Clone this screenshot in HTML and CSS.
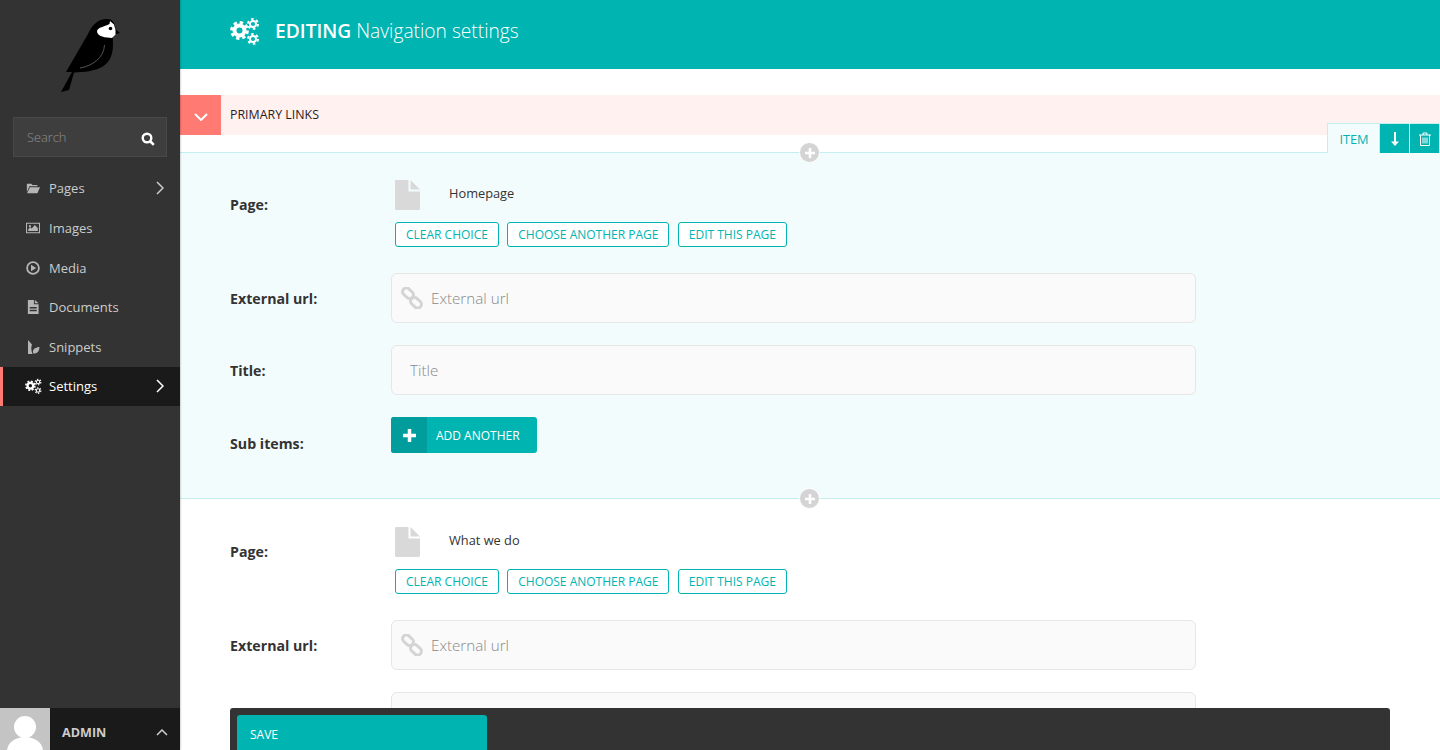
FILE: index.html
```html
<!DOCTYPE html>
<html lang="en">
<head>
    <meta name="viewport" content="width=device-width, initial-scale=1">
    <meta charset="UTF-8">
    <title>Editing Navigation settings</title>
    <link rel="stylesheet" href="styles.css">
</head>
<body>
    <svg class="defs" width="0" height="0">
        <symbol id="cogs" viewBox="0 0 30 28">
            <circle cx="9.500" cy="13.500" r="5" fill="none" stroke="currentColor" stroke-width="4"/>
            <circle cx="9.500" cy="13.500" r="8" fill="none" stroke="currentColor" stroke-width="2.800" stroke-dasharray="3.400 2.880"/>
            <circle cx="23" cy="7" r="3" fill="none" stroke="currentColor" stroke-width="1.900"/>
            <circle cx="23" cy="7" r="5" fill="none" stroke="currentColor" stroke-width="2" stroke-dasharray="2.600 2.640"/>
            <circle cx="23" cy="22" r="3" fill="none" stroke="currentColor" stroke-width="1.900"/>
            <circle cx="23" cy="22" r="5" fill="none" stroke="currentColor" stroke-width="2" stroke-dasharray="2.600 2.640"/>
        </symbol>
        <symbol id="doc" viewBox="0 0 25 30">
            <path fill="currentColor" d="M1 0H13.500V11.500H25V28.500Q25 30 23.500 30H1.500Q0 30 0 28.500V1Q0 0 1 0ZM15.500 0L25 9.500H15.500Z"/>
        </symbol>
        <symbol id="link" viewBox="0 0 22 22">
            <g fill="none" stroke="currentColor" stroke-width="3">
                <rect x="1" y="2.500" width="12" height="7.500" rx="3.700" transform="rotate(42 7 6.250)"/>
                <rect x="9" y="12" width="12" height="7.500" rx="3.700" transform="rotate(42 15 15.750)"/>
            </g>
        </symbol>
    </svg>

    <aside class="sidebar">
        <a class="logo" href="#">
            <svg width="62" height="76" viewBox="59 18 62 76">
                <path fill="#000" d="M61 92L72 72H66L88 34C92 25 98 19 107 19C112 19 115 22 115.500 29L120 33L114 34.500C112.500 37 113 39 113 44C113 58 108 64 100 68C92 71.500 84 72 74 72.500L69 90Z"/>
                <path fill="#fff" d="M97 31C98 27 104 27 109.500 24L110 21L114 24.500L115.500 30V34.500L112 38C106 37.500 97 37 97 31Z"/>
                <circle cx="110.500" cy="28.500" r="1.800" fill="#000"/>
                <path fill="none" stroke="#777" stroke-width="0.700" d="M104.500 45C104 58 92 66 80 68"/>
            </svg>
        </a>
        <form class="search">
            <input class="search-input" type="text" placeholder="Search">
            <svg class="search-icon" width="14" height="14" viewBox="0 0 14 14">
                <circle cx="6" cy="6" r="4.300" fill="none" stroke="currentColor" stroke-width="2.400"/>
                <path d="M9 9L12.800 12.800" stroke="currentColor" stroke-width="2.600"/>
            </svg>
        </form>
        <nav class="menu">
            <a class="menu-item" href="#">
                <svg class="menu-icon" viewBox="0 0 16 14"><path fill="currentColor" d="M1 2H6L7.500 3.500H13V5H4L1 11.500V2ZM4.500 6H16L13 13H1.200Z"/></svg>
                <span>Pages</span>
                <svg class="menu-arrow" viewBox="0 0 8 14"><path d="M1 1L7 7L1 13"/></svg>
            </a>
            <a class="menu-item" href="#">
                <svg class="menu-icon" viewBox="0 0 16 14"><path fill="currentColor" fill-rule="evenodd" d="M0 1H16V13H0ZM1.200 2.200V11.800H14.800V2.200ZM2.500 10.500V8.500L5 6L6.500 7.500L10 3.500L13.500 7V10.500ZM4.500 3.500A1.300 1.300 0 1 1 4.490 3.500Z"/></svg>
                <span>Images</span>
            </a>
            <a class="menu-item" href="#">
                <svg class="menu-icon" viewBox="0 0 14 14"><circle cx="7" cy="7" r="5.900" fill="none" stroke="currentColor" stroke-width="1.800"/><path fill="currentColor" d="M5 3.800L10.200 7L5 10.200Z"/></svg>
                <span>Media</span>
            </a>
            <a class="menu-item" href="#">
                <svg class="menu-icon" viewBox="0 0 14 15"><path fill="currentColor" fill-rule="evenodd" d="M1.500 0H8V4.500H13V15H1.500ZM3.500 7.500V9H11V7.500ZM3.500 10.500V12H11V10.500ZM9 0L13 3.500H9Z"/></svg>
                <span>Documents</span>
            </a>
            <a class="menu-item" href="#">
                <svg class="menu-icon" viewBox="0 0 14 14"><path fill="currentColor" d="M2 0L6 4.500C5 7 5 10 6.500 14H2ZM13.500 7C13.500 11 11 14 7.500 13.500C6 11 7.500 7.500 13.500 7Z"/></svg>
                <span>Snippets</span>
            </a>
            <a class="menu-item active" href="#">
                <svg class="menu-icon cog-icon"><use href="#cogs"/></svg>
                <span>Settings</span>
                <svg class="menu-arrow" viewBox="0 0 8 14"><path d="M1 1L7 7L1 13"/></svg>
            </a>
        </nav>
        <div class="account">
            <div class="avatar">
                <svg width="50" height="42" viewBox="0 0 50 42">
                    <circle cx="25" cy="19" r="11" fill="#fff"/>
                    <path fill="#fff" d="M7 42C8 34 16 29 25 29S42 34 43 42Z"/>
                </svg>
            </div>
            <span class="account-name">ADMIN</span>
            <svg class="account-arrow" viewBox="0 0 12 7"><path d="M1 6L6 1L11 6"/></svg>
        </div>
    </aside>

    <main class="content">
        <header class="top">
            <svg class="top-icon"><use href="#cogs"/></svg>
            <h1><b>EDITING</b> Navigation settings</h1>
        </header>

        <section class="links">
            <div class="links-head">
                <span class="collapse">
                    <svg width="14" height="8" viewBox="0 0 14 8"><path d="M1 1L7 7L13 1"/></svg>
                </span>
                <h2>PRIMARY LINKS</h2>
            </div>

            <div class="item item-open">
                <span class="add-circle"><svg width="10" height="10" viewBox="0 0 10 10"><path d="M5 0V10M0 5H10"/></svg></span>
                <div class="item-tools">
                    <span class="item-tag">ITEM</span>
                    <span class="tool">
                        <svg width="8" height="14" viewBox="0 0 8 14"><path fill="#fff" d="M3 0H5V9.500H8L4 14L0 9.500H3Z"/></svg>
                    </span>
                    <span class="tool">
                        <svg width="12" height="14" viewBox="0 0 12 14"><path fill="none" stroke="#fff" d="M0 3H12M4 3V1H8V3M1.500 3V13.500H10.500V3M4 5.500V11.500M6 5.500V11.500M8 5.500V11.500"/></svg>
                    </span>
                </div>

                <div class="row row-page">
                    <label class="label">Page:</label>
                    <div class="chooser">
                        <div class="chosen">
                            <svg class="doc-icon"><use href="#doc"/></svg>
                            <span>Homepage</span>
                        </div>
                        <div class="chooser-actions">
                            <a class="btn" href="#">CLEAR CHOICE</a>
                            <a class="btn" href="#">CHOOSE ANOTHER PAGE</a>
                            <a class="btn" href="#">EDIT THIS PAGE</a>
                        </div>
                    </div>
                </div>
                <div class="row">
                    <label class="label">External url:</label>
                    <div class="field">
                        <svg class="field-icon"><use href="#link"/></svg>
                        <input class="input input-icon" type="text" placeholder="External url">
                    </div>
                </div>
                <div class="row">
                    <label class="label">Title:</label>
                    <div class="field">
                        <input class="input" type="text" placeholder="Title">
                    </div>
                </div>
                <div class="row row-sub">
                    <label class="label">Sub items:</label>
                    <a class="add-btn" href="#">
                        <span class="add-btn-icon"><svg width="13" height="13" viewBox="0 0 13 13"><path d="M6.500 0V13M0 6.500H13"/></svg></span>
                        <span class="add-btn-text">ADD ANOTHER</span>
                    </a>
                </div>
            </div>

            <div class="item">
                <span class="add-circle"><svg width="10" height="10" viewBox="0 0 10 10"><path d="M5 0V10M0 5H10"/></svg></span>
                <div class="row row-page">
                    <label class="label">Page:</label>
                    <div class="chooser">
                        <div class="chosen">
                            <svg class="doc-icon"><use href="#doc"/></svg>
                            <span>What we do</span>
                        </div>
                        <div class="chooser-actions">
                            <a class="btn" href="#">CLEAR CHOICE</a>
                            <a class="btn" href="#">CHOOSE ANOTHER PAGE</a>
                            <a class="btn" href="#">EDIT THIS PAGE</a>
                        </div>
                    </div>
                </div>
                <div class="row">
                    <label class="label">External url:</label>
                    <div class="field">
                        <svg class="field-icon"><use href="#link"/></svg>
                        <input class="input input-icon" type="text" placeholder="External url">
                    </div>
                </div>
                <div class="row">
                    <label class="label"></label>
                    <div class="field">
                        <input class="input" type="text">
                    </div>
                </div>
            </div>
        </section>

        <div class="save-bar">
            <button class="save" type="button">SAVE</button>
        </div>
    </main>
</body>
</html>
```

FILE: styles.css
```css
* {
    box-sizing: border-box;
}

body {
    font-family: "Open Sans", sans-serif;
    margin: 0;
    padding: 0;
    display: flex;
    height: 100vh;
    overflow: hidden;
    background-color: #fff;
    color: #333;
}

a {
    text-decoration: none;
}

h1, h2 {
    margin: 0;
}

.defs {
    position: absolute;
}

/* sidebar */
.sidebar {
    width: 180px;
    flex-shrink: 0;
    display: flex;
    flex-direction: column;
    background-color: #333;
    box-shadow: 0 0 2px rgba(0, 0, 0, 0.4);
    z-index: 2;
}

.logo {
    display: flex;
    justify-content: center;
    height: 117px;
    padding-top: 18px;
}

.search {
    position: relative;
    margin: 0 13px 11.6px;
}

.search-input {
    display: block;
    width: 100%;
    height: 40px;
    padding: 0 13px;
    background-color: #3e3e3e;
    border: 1px solid #494949;
    font-family: inherit;
    font-size: 12.8px;
    font-weight: 300;
}

.search-input::placeholder {
    color: #8f8f8f;
    opacity: 1;
}

.search-icon {
    position: absolute;
    top: 15px;
    right: 12px;
    color: #fff;
}

.menu {
    flex: 1;
}

.menu-item {
    display: flex;
    align-items: center;
    height: 39.6px;
    padding-left: 26px;
    color: #ccc;
    font-size: 13px;
}

.menu-item.active {
    background-color: #1a1a1a;
    border-left: 3px solid #ff7a72;
    padding-left: 22px;
    color: #fff;
}

.menu-icon {
    width: 14px;
    height: 14px;
    margin-right: 9px;
    color: #b5b5b5;
}

.cog-icon {
    width: 17px;
    height: 16px;
    margin-right: 7px;
    color: #fff;
}

.menu-arrow {
    width: 8px;
    height: 14px;
    margin-left: auto;
    margin-right: 16px;
}

.menu-arrow path, .account-arrow path {
    fill: none;
    stroke: currentColor;
    stroke-width: 1.5;
}

.account {
    display: flex;
    align-items: center;
    height: 42px;
    background-color: #1a1a1a;
    color: #ccc;
}

.avatar {
    width: 50px;
    height: 42px;
    background-color: #c4c4c4;
}

.avatar svg {
    display: block;
}

.account-name {
    margin: 7px 0 0 12px;
    font-size: 12.6px;
    font-weight: 700;
}

.account-arrow {
    width: 12px;
    height: 7px;
    margin: 7px 12px 0 auto;
}

/* main */
.content {
    flex: 1;
    position: relative;
    min-width: 0;
    overflow: hidden;
}

.top {
    display: flex;
    align-items: center;
    height: 69px;
    padding: 0 0 8px 50px;
    background-color: #00b4b1;
    color: #fff;
}

.top-icon {
    width: 30px;
    height: 28px;
    margin-right: 15px;
}

.top h1 {
    font-size: 19.2px;
    font-weight: 300;
}

.top b {
    font-weight: 600;
}

.links {
    padding-top: 26px;
}

.links-head {
    display: flex;
    align-items: center;
    height: 40px;
    margin-bottom: 17px;
    background-color: #fef1f0;
}

.collapse {
    display: flex;
    align-items: center;
    justify-content: center;
    width: 41px;
    height: 40px;
    padding-top: 3px;
    background-color: #ff7a72;
}

.collapse path {
    fill: none;
    stroke: #fff;
    stroke-width: 2;
}

.links-head h2 {
    margin: 0 0 1px 9px;
    font-size: 12.4px;
    font-weight: 400;
    color: #2e1a1b;
}

.item {
    position: relative;
    height: 346px;
    padding: 26px 50px 0;
    border-top: 1px solid #c3efef;
}

.item-open {
    padding-top: 25px;
    background-color: #f3fcfd;
}

.add-circle {
    position: absolute;
    top: -11px;
    left: 619px;
    display: flex;
    align-items: center;
    justify-content: center;
    width: 21px;
    height: 21px;
    background-color: #d4d4d4;
    border: 1px solid #fff;
    border-radius: 50%;
}

.add-circle path {
    stroke: #fff;
    stroke-width: 2.5;
}

.item-tools {
    position: absolute;
    top: -30px;
    right: 1px;
    display: flex;
    height: 30px;
}

.item-tag {
    width: 53px;
    padding-left: 1px;
    line-height: 30px;
    text-align: center;
    font-size: 12.8px;
    color: #00b4b1;
    background-color: #f3fcfd;
    border: 1px solid #c3efef;
    border-bottom: none;
}

.tool {
    display: flex;
    align-items: center;
    justify-content: center;
    width: 29px;
    margin-right: 1px;
    background-color: #00b4b1;
    border-top: 1px solid #c3efef;
}

.tool:last-child {
    margin-right: 0;
}

.row {
    display: flex;
    align-items: center;
    height: 50px;
    margin-bottom: 22px;
}

.row-page {
    height: 69px;
    margin-bottom: 26px;
}

.row-sub {
    height: 36px;
}

.label {
    width: 161px;
    flex-shrink: 0;
    font-size: 14.2px;
    font-weight: 700;
    color: #333;
}

.row-page .label {
    padding-bottom: 17px;
}

.row-sub .label {
    padding-top: 16px;
}

.chooser {
    padding-left: 4px;
}

.chosen {
    display: flex;
    align-items: center;
    height: 31px;
    font-size: 12.8px;
    color: #333;
}

.chosen span {
    margin-bottom: 3px;
}

.doc-icon {
    width: 25px;
    height: 30px;
    margin: 2px 29px 0 0;
    color: #d9d9d9;
}

.chooser-actions {
    display: flex;
    gap: 8.3px;
    margin-top: 12px;
}

.btn {
    display: block;
    height: 25px;
    padding: 0 10px;
    line-height: 23px;
    font-size: 12px;
    color: #00b4b1;
    background-color: #fff;
    border: 1px solid #00b4b1;
    border-radius: 3px;
}

.field {
    position: relative;
    width: 805px;
}

.field-icon {
    position: absolute;
    top: 14px;
    left: 10px;
    width: 22px;
    height: 22px;
    color: #d4d4d4;
}

.input {
    display: block;
    width: 100%;
    height: 50px;
    padding: 0 18px;
    background-color: #fafafa;
    border: 1px solid #e6e6e6;
    border-radius: 6px;
    font-family: inherit;
    font-size: 15.2px;
    font-weight: 300;
}

.input-icon {
    padding-left: 39px;
}

.input::placeholder {
    color: #888;
    opacity: 1;
}

.add-btn {
    display: flex;
    align-items: center;
    height: 36px;
    color: #fff;
    background-color: #00b4b1;
    border-radius: 3px;
    overflow: hidden;
}

.add-btn-icon {
    display: flex;
    align-items: center;
    justify-content: center;
    width: 36px;
    height: 36px;
    background-color: #009d9c;
}

.add-btn-icon path {
    stroke: #fff;
    stroke-width: 3.5;
}

.add-btn-text {
    padding: 0 17px 0 9px;
    font-size: 12px;
}

.save-bar {
    position: absolute;
    bottom: 0;
    left: 50px;
    width: 1160px;
    height: 42px;
    padding: 7px 7px 0;
    background-color: #333;
    border-radius: 3px 3px 0 0;
    overflow: hidden;
}

.save {
    display: block;
    width: 250px;
    height: 38px;
    padding: 0 13px;
    text-align: left;
    font-family: inherit;
    font-size: 12px;
    font-weight: 400;
    color: #fff;
    background-color: #00b4b1;
    border: none;
    border-radius: 3px;
}
```
